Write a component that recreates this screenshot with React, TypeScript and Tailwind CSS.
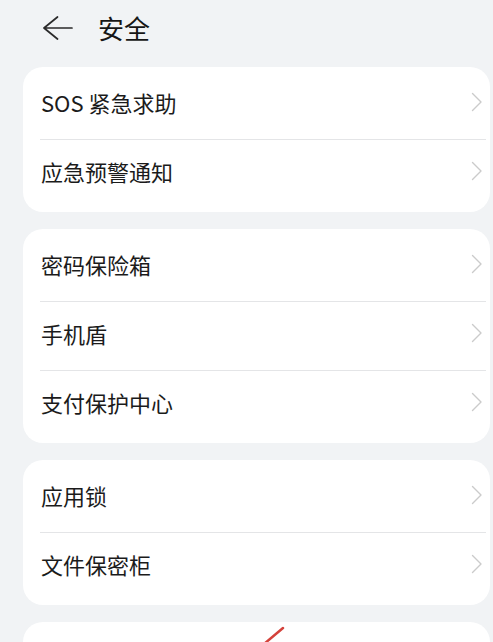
import React from "react";

function Chevron() {
  return (
    <svg width="12" height="20" viewBox="0 0 12 20" fill="none" className="shrink-0">
      <path d="M1.5 1.5 L10 10 L1.5 18.5" stroke="#cbcbcb" strokeWidth="1.4" strokeLinecap="round" strokeLinejoin="round" />
    </svg>
  );
}

function Row({ label }: { label: string }) {
  return (
    <div className="h-[68px] flex items-center justify-between pl-[18px] pr-[7px] pb-[6px]">
      <span className="text-[22px] leading-none text-[#1b1b1b]">{label}</span>
      <Chevron />
    </div>
  );
}

function Divider() {
  return <div className="h-px bg-[#e4e5e7] ml-[17px] mr-[4px]" />;
}

function Card({ items }: { items: string[] }) {
  return (
    <div className="ml-[23px] w-[467px] bg-white rounded-[20px] py-[4px]">
      {items.map((it, i) => (
        <React.Fragment key={it}>
          {i > 0 && <Divider />}
          <Row label={it} />
        </React.Fragment>
      ))}
    </div>
  );
}

export default function App() {
  return (
    <div className="relative w-[493px] h-[642px] overflow-hidden bg-[#f1f3f5] font-['Noto_Sans_CJK_SC','Noto_Sans',sans-serif]">
      <div className="h-[59px] flex items-center pl-[43px] pb-[4px]">
        <svg width="30" height="24" viewBox="0 0 30 24" fill="none">
          <path d="M14.5 1 L1 12 L14.5 23 M1 12 H29" stroke="#2a2a2a" strokeWidth="1.7" strokeLinecap="round" strokeLinejoin="round" />
        </svg>
        <span className="ml-[25px] text-[26px] leading-none font-normal text-[#161616]">安全</span>
      </div>
      <div className="pt-[8px] flex flex-col gap-[17px]">
        <Card items={["SOS 紧急求助", "应急预警通知"]} />
        <Card items={["密码保险箱", "手机盾", "支付保护中心"]} />
        <Card items={["应用锁", "文件保密柜"]} />
        <div className="ml-[23px] w-[467px] h-[60px] bg-white rounded-[20px]" />
      </div>
      <svg className="absolute left-[255px] top-[622px]" width="40" height="22" viewBox="0 0 40 22" fill="none">
        <path d="M9 22 L28 6" stroke="#d4423b" strokeWidth="2.5" strokeLinecap="round" />
      </svg>
    </div>
  );
}
